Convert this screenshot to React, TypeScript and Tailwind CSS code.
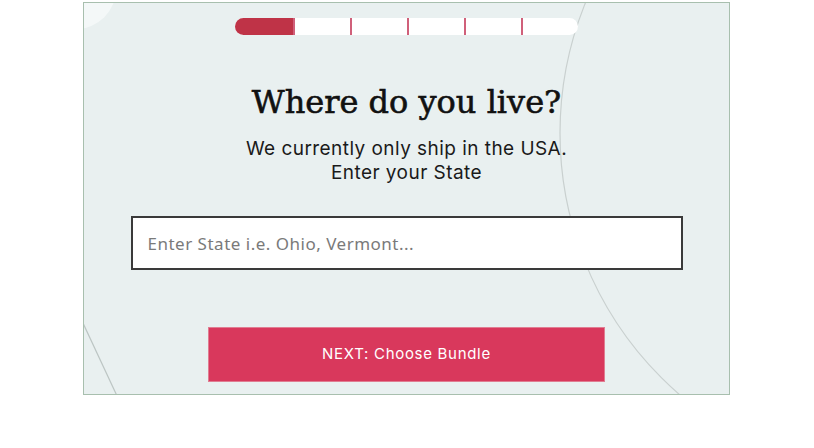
import React from "react";

export default function App() {
  const segs = [0, 1, 2, 3, 4, 5];
  return (
    <div className="w-[814px] h-[448px] bg-white pt-[2px]">
      <div className="relative ml-[83px] w-[647px] h-[393px] bg-[#e9f0f0] border border-[#a8bfae] overflow-hidden flex flex-col items-center">
        <svg className="absolute inset-0 pointer-events-none" width="647" height="393" viewBox="0 0 647 393">
          <circle cx="822" cy="130" r="346" fill="none" stroke="#c9d0cf" strokeWidth="1.2" />
          <path d="M -2 318 Q 14 352 34 395" fill="none" stroke="#bcc5c3" strokeWidth="1.2" />
          <circle cx="-8" cy="-14" r="40" fill="#f4f8f8" />
        </svg>
        <div className="relative mt-[15px] w-[343px] h-[17px] rounded-full bg-white flex overflow-hidden">
          {segs.map((i) => (
            <div
              key={i}
              className={
                i === 0
                  ? "w-[58px] h-full bg-[#bf3347]"
                  : "w-[57px] h-full border-l-2 border-[#d0607a]"
              }
            />
          ))}
        </div>
        <h1
          className="relative mt-[47px] text-[32px] leading-[40px] text-[#111] [-webkit-text-stroke:0.6px_#111]"
          style={{ fontFamily: '"DejaVu Serif", serif' }}
        >
          Where do you live?
        </h1>
        <div
          className="relative mt-[15px] flex flex-col items-center text-[19px] tracking-[0.45px] text-[#1a1a1a]"
          style={{ fontFamily: '"Inter", sans-serif' }}
        >
          <span className="block h-[24px] leading-[24px]">We currently only ship in the USA.</span>
          <span className="block h-[24px] leading-[24px]">Enter your State</span>
        </div>
        <input
          className="relative mt-[31px] w-[552px] h-[54px] bg-white border-2 border-[#3a3a3a] px-[15px] text-[17px] tracking-[0.5px] text-[#333] placeholder:text-[#7a7a7a] outline-none"
          style={{ fontFamily: '"Noto Sans", sans-serif' }}
          placeholder="Enter State i.e. Ohio, Vermont..."
        />
        <button
          className="relative mt-[57px] w-[397px] h-[55px] bg-[#d9385c] border border-[#e07d92] text-white text-[15px] tracking-[0.7px]"
          style={{ fontFamily: '"Inter", sans-serif' }}
        >
          NEXT: Choose Bundle
        </button>
      </div>
    </div>
  );
}
